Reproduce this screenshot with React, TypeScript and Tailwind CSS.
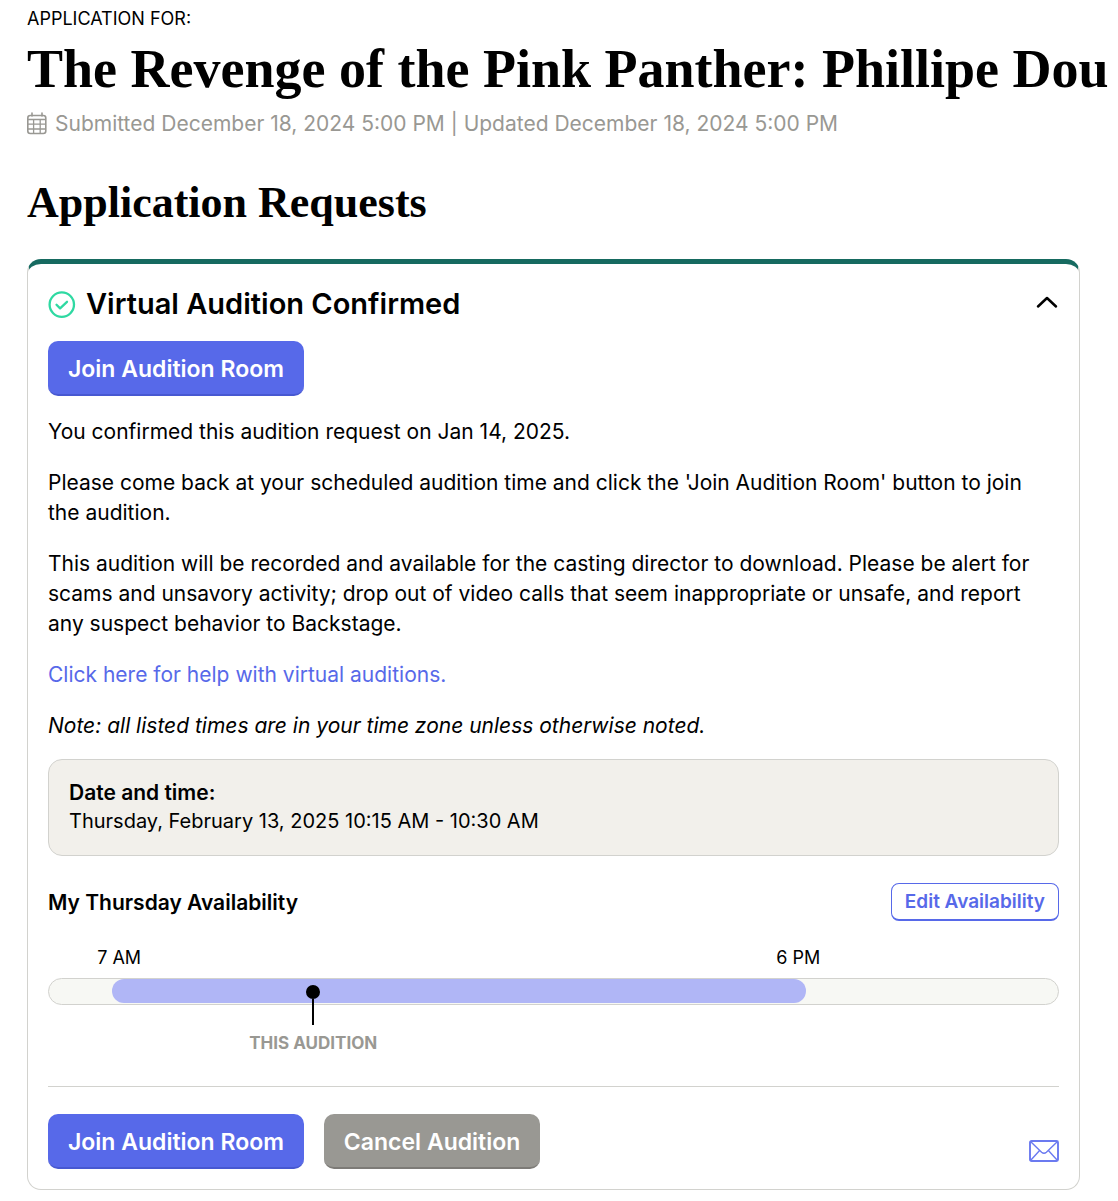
import { useState } from "react";
import type { ButtonHTMLAttributes } from "react";
import clsx from "clsx";

// The availability bar runs from 6 AM to 10 PM
const DAY_START = 6;
const DAY_HOURS = 16;

const toPercent = (hours: number) => (hours / DAY_HOURS) * 100;

interface ActionButtonProps extends ButtonHTMLAttributes<HTMLButtonElement> {
  variant?: "primary" | "muted";
}

function ActionButton({ variant = "primary", children, ...props }: ActionButtonProps) {
  return (
    <button
      type="button"
      className={clsx(
        "h-[55px] rounded-[10px] border-b-2 px-5 pt-[2px] text-[23px] font-semibold text-white",
        variant === "primary"
          ? "border-[#4758d1] bg-[#5769e9]"
          : "border-[#7d7b77] bg-[#999893]"
      )}
      {...props}
    >
      {children}
    </button>
  );
}

function CalendarIcon() {
  return (
    <svg width="20" height="24" viewBox="0 0 20 24" fill="none" stroke="currentColor" strokeWidth="1.3" aria-hidden="true">
      <rect x="0.8" y="3.5" width="18" height="18" rx="2.5" strokeWidth="1.6" />
      <path d="M1 7.5h18M1 12.2h18M1 17h18M6.6 7.5v14M13.2 7.5v14" />
      <path d="M5 1v3M15 1v3" strokeWidth="1.6" strokeLinecap="round" />
    </svg>
  );
}

function CheckCircleIcon() {
  return (
    <svg width="28" height="28" viewBox="0 0 28 28" fill="none" stroke="#2fd9a2" strokeWidth="2.3" aria-hidden="true">
      <circle cx="13.8" cy="14.6" r="12.2" />
      <path d="M8.5 14.8l3.6 3.6 6.9-6.6" strokeLinecap="round" strokeLinejoin="round" />
    </svg>
  );
}

function ChevronIcon({ open }: { open: boolean }) {
  return (
    <svg
      width="24"
      height="16"
      viewBox="0 0 24 16"
      fill="none"
      stroke="currentColor"
      strokeWidth="2.5"
      className={clsx(!open && "rotate-180")}
      aria-hidden="true"
    >
      <path d="M3 10.5L12 2l9 8.5" strokeLinecap="round" strokeLinejoin="round" />
    </svg>
  );
}

function EnvelopeIcon() {
  return (
    <svg width="30" height="22" viewBox="0 0 30 22" fill="none" stroke="#6b7af0" aria-hidden="true">
      <rect x="1" y="1" width="28" height="20" rx="1.5" strokeWidth="1.9" />
      <path d="M1.5 1.5L12.6 12.2q2.4 2 4.8 0L28.5 1.5M1.5 20.5L10.6 10.5M28.5 20.5L19.4 10.5" strokeWidth="1.4" />
    </svg>
  );
}

interface AvailabilityBarProps {
  from: number;
  to: number;
  audition: number;
}

function AvailabilityBar({ from, to, audition }: AvailabilityBarProps) {
  const range = {
    marginLeft: `${toPercent(from - DAY_START)}%`,
    width: `${toPercent(to - from)}%`,
  };

  return (
    <div className="mt-6 mb-[81px]">
      <div style={range}>
        <div className="-mx-[14px] flex justify-between text-[18px] leading-[26px]">
          <span>7 AM</span>
          <span>6 PM</span>
        </div>
      </div>
      <div className="relative mt-[7px] h-[27px] rounded-full border border-[#d2d2ce] bg-[#f7f8f4]">
        <div className="h-6 rounded-full bg-[#b0b6f6]" style={range} />
        <div
          className="absolute top-[6px] flex -translate-x-1/2 flex-col items-center"
          style={{ left: `${toPercent(audition - DAY_START)}%` }}
        >
          <span className="size-[14px] rounded-full bg-black" />
          <span className="h-[26px] w-[2px] bg-black" />
          <span className="mt-[5px] text-[17px] leading-[26px] font-bold whitespace-nowrap text-[#999893]">
            THIS AUDITION
          </span>
        </div>
      </div>
    </div>
  );
}

export default function App() {
  const [open, setOpen] = useState(true);

  return (
    <main className="overflow-hidden bg-white pt-[6px] pr-[38px] pb-[11px] pl-[27px] font-['Inter',sans-serif] text-[21px] leading-[30px] text-black">
      <p className="text-[18px] leading-[26px]">APPLICATION FOR:</p>
      <h1 className="mt-[7px] font-['Liberation_Serif',serif] text-[54px] leading-[60px] font-bold whitespace-nowrap">
        The Revenge of the Pink Panther: Phillipe Dou
      </h1>
      <p className="mt-[10px] flex items-center gap-2 text-[#999893]">
        <CalendarIcon />
        Submitted December 18, 2024 5:00 PM | Updated December 18, 2024 5:00 PM
      </p>

      <h2 className="mt-[40px] font-['Liberation_Serif',serif] text-[44px] leading-[48px] font-bold">
        Application Requests
      </h2>

      <section className="mt-8 rounded-[14px] border border-t-[5px] border-[#d2d2ce] border-t-[#166a60] px-5 pt-[22px] pb-5">
        <div className="mb-[19px] flex items-center justify-between">
          <h3 className="flex items-center gap-[10px] text-[29px] leading-[36px] font-semibold">
            <CheckCircleIcon />
            Virtual Audition Confirmed
          </h3>
          <button type="button" aria-label="Toggle details" aria-expanded={open} onClick={() => setOpen(!open)}>
            <ChevronIcon open={open} />
          </button>
        </div>

        {open && (
          <>
            <ActionButton>Join Audition Room</ActionButton>

            <div className="mt-[21px] space-y-[21px] pr-3">
              <p>You confirmed this audition request on Jan 14, 2025.</p>
              <p>
                Please come back at your scheduled audition time and click the 'Join Audition Room' button to join
                the audition.
              </p>
              <p>
                This audition will be recorded and available for the casting director to download. Please be alert for
                scams and unsavory activity; drop out of video calls that seem inappropriate or unsafe, and report
                any suspect behavior to Backstage.
              </p>
              <p>
                <a href="#help" className="text-[#5769e9]">
                  Click here for help with virtual auditions.
                </a>
              </p>
              <p className="italic">Note: all listed times are in your time zone unless otherwise noted.</p>
            </div>

            <div className="mt-[18px] rounded-[14px] border border-[#d2d2ce] bg-[#f2f0eb] px-5 pt-[18px] pb-[19px] leading-[29px]">
              <p className="font-semibold">Date and time:</p>
              <p className="text-[20px]">Thursday, February 13, 2025 10:15 AM - 10:30 AM</p>
            </div>

            <div className="mt-[27px] flex items-center justify-between">
              <h4 className="pt-[2px] font-semibold">My Thursday Availability</h4>
              <button
                type="button"
                className="h-[38px] rounded-lg border border-b-2 border-[#5769e9] px-[13px] text-[19px] font-semibold text-[#5769e9]"
              >
                Edit Availability
              </button>
            </div>

            <AvailabilityBar from={7} to={18} audition={10.19} />
          </>
        )}

        <div className="flex items-end justify-between border-t border-[#d2d2ce] pt-[27px]">
          <div className="flex gap-5">
            <ActionButton>Join Audition Room</ActionButton>
            <ActionButton variant="muted">Cancel Audition</ActionButton>
          </div>
          <a href="#message" aria-label="Message casting director" className="pb-[7px]">
            <EnvelopeIcon />
          </a>
        </div>
      </section>
    </main>
  );
}
